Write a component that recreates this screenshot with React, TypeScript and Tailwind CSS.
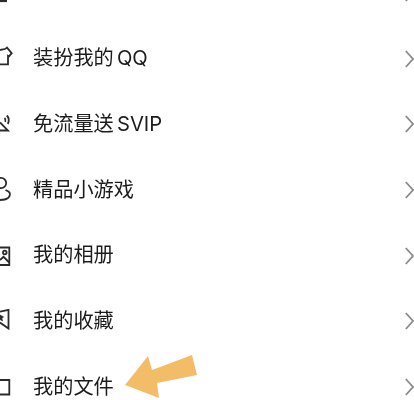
const ChevronRight = () => (
  <svg width="9" height="18" viewBox="0 0 9 18" fill="none" className="mt-[2px] shrink-0">
    <path d="M0.8 1 L8 9 L0.8 17" stroke="#8a8a8a" strokeWidth="1.8" />
  </svg>
);

const iconProps = {
  width: 13,
  height: 28,
  viewBox: '0 0 13 28',
  fill: 'none',
  stroke: '#2b2b2b',
  strokeWidth: 1.8,
  className: 'shrink-0',
};

const TopIcon = () => (
  <svg {...iconProps}>
    <path d="M0 23 L7 23" strokeWidth="2.200" />
  </svg>
);

const ShirtIcon = () => (
  <svg {...iconProps}>
    <path d="M0 6 L3 5.400 C4 5.400 5.500 5 7 3.600 L11.700 9.200 L9 12.400 L8 11.800 L8 20.400 L0 20.400" />
  </svg>
);

const SignalIcon = () => (
  <svg {...iconProps}>
    <path d="M0 13.500 L8 21.500 L0 21.500" />
    <path d="M4.500 9 C5.500 10 5.800 11.500 5.300 13 M6.800 6.500 C8.800 8.500 9.200 12 7.800 15" />
  </svg>
);

const GameIcon = () => (
  <svg {...iconProps}>
    <circle cx="1" cy="8" r="5.200" />
    <path d="M5.500 15 L8.500 16.500 C10.500 17.800 10.500 21 8 23 C6 24.500 3 25 0 25" />
  </svg>
);

const AlbumIcon = () => (
  <svg {...iconProps}>
    <path d="M0 6.500 L9.300 6.500 L9.300 24 L0 24" />
    <circle cx="4.800" cy="11.500" r="1.800" />
    <path d="M0 19 L3.500 15.800 L9.300 21.500" />
  </svg>
);

const StarIcon = () => (
  <svg {...iconProps}>
    <path d="M0 5.600 L8.500 3.800 L8.500 22.600 L0 16.600" />
    <path d="M0 9 L3.500 10.800 L2 12.500 L2.500 15 L0 13.500 Z" fill="#2b2b2b" strokeWidth="0.600" />
  </svg>
);

const FileIcon = () => (
  <svg {...iconProps}>
    <path d="M0 8 L9.300 8 L9.300 22.500 L0 22.500" />
  </svg>
);

const rows = [
  { label: '我的个性装扮', icon: <TopIcon />, textClass: '-translate-y-[5px] text-[#8a8a8a]' },
  { label: '装扮我的 QQ', icon: <ShirtIcon />, textClass: 'text-[#1c1c1c]' },
  { label: '免流量送 SVIP', icon: <SignalIcon />, textClass: 'text-[#1c1c1c]' },
  { label: '精品小游戏', icon: <GameIcon />, textClass: 'text-[#1c1c1c]' },
  { label: '我的相册', icon: <AlbumIcon />, textClass: 'text-[#1c1c1c]' },
  { label: '我的收藏', icon: <StarIcon />, textClass: 'text-[#1c1c1c]' },
  { label: '我的文件', icon: <FileIcon />, textClass: 'text-[#1c1c1c]' },
];

export default function App() {
  return (
    <div className="relative h-[400px] w-[414px] overflow-hidden bg-white font-['Inter','Noto_Sans_CJK_SC','Liberation_Sans',sans-serif]">
      <div className="-mt-[41px] flex flex-col blur-[0.3px]">
        {rows.map((row) => (
          <div key={row.label} className="flex h-[65.7px] items-center">
            <div className="w-[33px] shrink-0">{row.icon}</div>
            <span className={`flex-1 pt-[2px] text-[20.2px] leading-none [word-spacing:-2.5px] ${row.textClass}`}>{row.label}</span>
            <ChevronRight />
          </div>
        ))}
      </div>
      {/* orange annotation arrow */}
      <svg width="80" height="50" viewBox="0 0 80 50" className="absolute left-[122px] top-[351px]">
        <path d="M3 34 L26 5 L30 19 L70 4 L75 24 L35 32 L37 47 Z" fill="#f3bd68" />
      </svg>
    </div>
  );
}
